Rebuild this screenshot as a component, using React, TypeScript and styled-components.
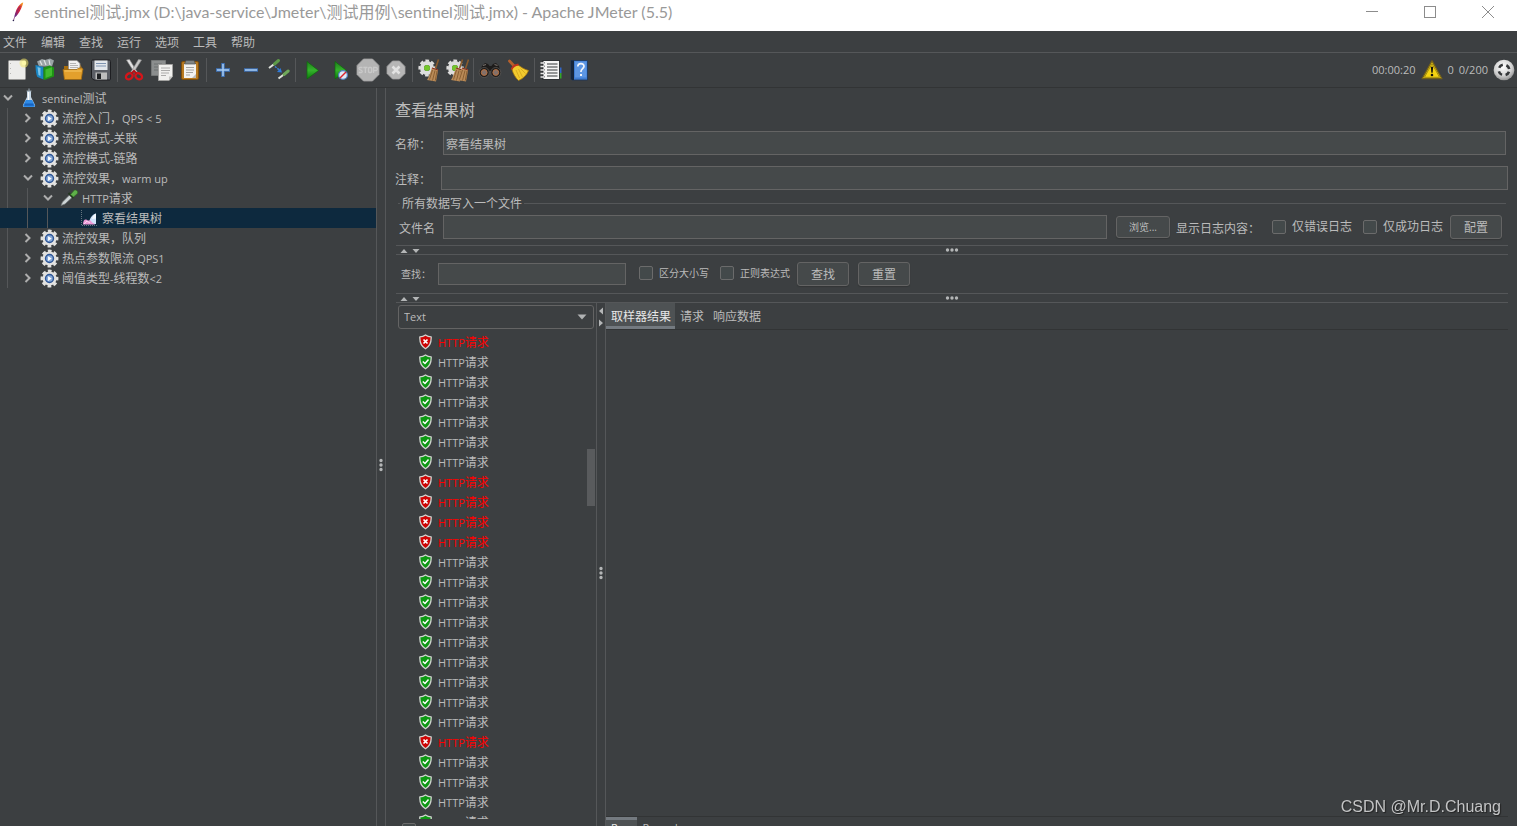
import React from 'react';
import styled, { createGlobalStyle, css } from 'styled-components';

const c = {
  bg: '#3c3f41',
  line: '#555759',
  darkLine: '#323435',
  text: '#bbbbbb',
  field: '#45494a',
  fieldBorder: '#646464',
  selection: '#0d293e',
  tab: '#4e5254',
  underline: '#747a80',
  error: '#ff0000',
};

const GlobalStyle = createGlobalStyle`
  *, *::before, *::after { box-sizing: border-box; }
  body {
    margin: 0;
    background: ${c.bg};
    color: ${c.text};
    font: 12px/16px 'Open Sans', 'Noto Sans CJK SC', sans-serif;
  }
  button, input, select { font: inherit; color: inherit; margin: 0; }
  svg { display: block; flex: none; }
`;

/* ---------- text ---------- */

const Latin = styled.span`
  font-size: 11px;
`;

const MixedText = styled.span`
  padding-top: 2px;
`;

/* Latin runs are set one size smaller than the Chinese text around them. */
function Label({ children }: { children: string }) {
  const parts = children.split(/([\x21-\x7e][\x20-\x7e]*)/).filter(Boolean);
  return (
    <MixedText>
      {parts.map((p, i) => (/^[\x21-\x7e]/.test(p) ? <Latin key={i}>{p}</Latin> : p))}
    </MixedText>
  );
}

/* ---------- frame ---------- */

const Window = styled.div`
  display: flex;
  flex-direction: column;
  height: 100vh;
  overflow: hidden;
  white-space: nowrap;
`;

const TitleBar = styled.header`
  display: flex;
  align-items: center;
  flex: none;
  height: 31px;
  padding-left: 10px;
  background: #ffffff;
  color: #999999;
`;

const FeatherBox = styled.span`
  margin-bottom: 8px;
`;

const TitleText = styled.h1`
  flex: 1;
  margin: 0 0 8px 8px;
  font: 400 16px/24px Lato, 'Noto Sans CJK SC', sans-serif;
`;

const WindowButton = styled.button`
  display: flex;
  justify-content: center;
  align-items: center;
  width: 58px;
  height: 24px;
  margin-bottom: 7px;
  padding: 0;
  border: 0;
  background: none;
`;

const MenuBar = styled.nav`
  display: flex;
  align-items: center;
  gap: 14px;
  flex: none;
  height: 22px;
  padding-left: 3px;
  border-bottom: 1px solid ${c.line};
`;

const MenuButton = styled.button`
  padding: 2px 0 0;
  border: 0;
  background: none;
`;

const Toolbar = styled.div`
  display: flex;
  align-items: center;
  flex: none;
  height: 35px;
  padding: 0 2px 0 3px;
  border-bottom: 1px solid ${c.darkLine};
`;

const ToolButton = styled.button`
  display: flex;
  justify-content: center;
  align-items: center;
  width: 28px;
  height: 28px;
  padding: 0;
  border: 0;
  background: none;
`;

const ToolSeparator = styled.span`
  width: 1px;
  height: 24px;
  margin: 0 2px;
  background: ${c.line};
`;

const Status = styled.div`
  display: flex;
  align-items: center;
  gap: 5px;
  margin-left: auto;
`;

const Body = styled.div`
  display: flex;
  flex: 1;
  min-height: 0;
`;

/* ---------- tree ---------- */

const TreePanel = styled.aside`
  flex: none;
  width: 376px;
`;

const TreeList = styled.ul`
  margin: 0;
  padding: 0;
  list-style: none;
`;

const TreeRow = styled.li<{ $selected?: boolean }>`
  display: flex;
  align-items: center;
  height: 20px;
  background: ${(p) => (p.$selected ? c.selection : 'none')};
`;

const Guide = styled.span<{ $hidden?: boolean }>`
  align-self: stretch;
  width: 20px;
  background: ${(p) =>
    p.$hidden ? 'none' : `linear-gradient(${c.line}, ${c.line}) 7px 0 / 1px 100% no-repeat`};
`;

const Chevron = styled.span`
  display: flex;
  justify-content: center;
  width: 16px;
`;

const TreeIcon = styled.span`
  display: flex;
  justify-content: center;
  width: 20px;
  margin: 0 3px;
`;

/* ---------- splitters ---------- */

const VerticalSplitter = styled.div`
  position: relative;
  display: flex;
  align-items: center;
  justify-content: center;
  flex: none;
  width: 10px;
  padding-top: 16px;
  border: solid ${c.line};
  border-width: 0 1px;
`;

const VerticalArrows = styled.div`
  position: absolute;
  top: 4px;
  left: 0;
`;

const HorizontalSplitter = styled.div`
  position: relative;
  display: flex;
  align-items: center;
  justify-content: center;
  flex: none;
  height: 10px;
  margin-left: 1px;
  border: solid ${c.line};
  border-width: 1px 0;
`;

const HorizontalArrows = styled.div`
  position: absolute;
  top: 1px;
  left: 4px;
`;

/* ---------- form ---------- */

const Main = styled.main`
  display: flex;
  flex-direction: column;
  flex: 1;
  min-width: 0;
  padding: 12px 9px 0;
`;

const Heading = styled.h2`
  margin: 0;
  font-size: 16px;
  line-height: 20px;
  font-weight: 400;
`;

const FormRow = styled.div<{ $inset?: boolean }>`
  display: flex;
  align-items: center;
  margin-top: 11px;
  padding-right: ${(p) => (p.$inset ? 2 : 0)}px;
`;

const FieldLabel = styled.label<{ $width: number }>`
  flex: none;
  width: ${(p) => p.$width}px;
  padding-top: 4px;
`;

const TextField = styled.input<{ $width?: number; $low?: boolean }>`
  ${(p) =>
    p.$width
      ? css`
          flex: none;
          width: ${p.$width}px;
        `
      : css`
          flex: 1;
          min-width: 0;
        `}
  height: ${(p) => (p.$low ? 22 : 24)}px;
  padding: 2px 2px 0;
  border: 1px solid ${c.fieldBorder};
  border-radius: 0;
  background: ${c.field};
  outline: 0;
`;

const Legend = styled.div`
  display: flex;
  align-items: center;
  gap: 2px;
  height: 27px;
  margin-bottom: -2px;
  padding: 0 2px 0 3px;
  &::before, &::after {
    content: '';
    width: 2px;
    height: 1px;
    background: ${c.line};
  }
  &::after { flex: 1; }
`;

const FileRow = styled.div`
  display: flex;
  align-items: center;
  padding: 0 6px 0 4px;
  margin-bottom: 6px;
`;

const PushButton = styled.button<{ $small?: boolean }>`
  flex: none;
  width: ${(p) => (p.$small ? 54 : 52)}px;
  height: ${(p) => (p.$small ? 22 : 24)}px;
  padding: ${(p) => (p.$small ? 0 : 2)}px 0 0;
  border: 1px solid ${c.fieldBorder};
  border-radius: 3px;
  background: ${c.field};
  box-shadow: 0 1px 1px #333637;
  font-size: ${(p) => (p.$small ? 10 : 12)}px;
`;

const FileActions = styled.div`
  display: flex;
  align-items: center;
  flex: none;
  margin-left: 9px;
`;

const ActionText = styled.span`
  margin: 0 12px 0 6px;
  padding-top: 4px;
`;

const CheckLabel = styled.label<{ $small?: boolean; $after: number }>`
  display: flex;
  align-items: center;
  gap: 6px;
  margin-right: ${(p) => p.$after}px;
  font-size: ${(p) => (p.$small ? 10 : 12)}px;
`;

const CheckBox = styled.input.attrs({ type: 'checkbox' })`
  appearance: none;
  flex: none;
  width: 14px;
  height: 14px;
  border: 1px solid #6b6b6b;
  border-radius: 2px;
  background: #43494a;
`;

const SearchRow = styled.div`
  display: flex;
  align-items: center;
  flex: none;
  height: 38px;
  padding-left: 6px;
`;

const SearchLabel = styled.label`
  width: 37px;
  font-size: 10px;
`;

const SearchChecks = styled.div`
  display: flex;
  margin: 0 0 2px 13px;
`;

const SearchButtons = styled.div`
  display: flex;
  gap: 9px;
`;

/* ---------- results ---------- */

const Results = styled.section`
  display: flex;
  flex: 1;
  min-height: 0;
  margin-left: 1px;
`;

const ResultsColumn = styled.div`
  display: flex;
  flex-direction: column;
  flex: none;
  width: 200px;
  padding: 2px 1px 0 2px;
`;

const SelectBox = styled.div`
  position: relative;
  margin-right: 1px;
`;

const Select = styled.select`
  appearance: none;
  display: block;
  width: 100%;
  height: 24px;
  padding: 0 5px;
  border: 1px solid ${c.fieldBorder};
  border-radius: 3px;
  background: ${c.bg};
  font-size: 11px;
`;

const SelectArrow = styled.span`
  position: absolute;
  top: 9px;
  right: 7px;
  pointer-events: none;
`;

const ResultsScroll = styled.div`
  display: flex;
  flex: 1;
  min-height: 0;
  margin-top: 3px;
`;

const ResultsList = styled.ul`
  flex: 1;
  margin: 0;
  padding: 0 0 0 21px;
  list-style: none;
  overflow: hidden;
`;

const ResultRow = styled.li<{ $failed: boolean }>`
  display: flex;
  align-items: center;
  gap: 6px;
  height: 20px;
  color: ${(p) => (p.$failed ? c.error : c.text)};
`;

const ScrollTrack = styled.div`
  width: 8px;
  padding-top: 117px;
`;

const ScrollThumb = styled.div`
  height: 57px;
  background: #595b5d;
`;

const ResultsFooter = styled.div`
  flex: none;
  height: 7px;
  padding: 4px 0 0 4px;
  overflow: hidden;
`;

const Detail = styled.div`
  display: flex;
  flex-direction: column;
  flex: 1;
  min-width: 0;
`;

const TabRow = styled.div`
  display: flex;
  flex: none;
  height: 27px;
  border-bottom: 1px solid ${c.darkLine};
`;

const Tab = styled.button<{ $active?: boolean }>`
  height: 26px;
  padding: 5px 4px 0 5px;
  border: 0;
  border-bottom: 3px solid ${(p) => (p.$active ? c.underline : 'transparent')};
  background: ${(p) => (p.$active ? c.tab : 'none')};
  color: ${(p) => (p.$active ? '#e6e6e6' : c.text)};
`;

const DetailBody = styled.div`
  flex: 1;
`;

const FormatTabs = styled.div`
  display: flex;
  align-items: flex-start;
  flex: none;
  height: 10px;
  border-top: 1px solid ${c.darkLine};
  overflow: hidden;
`;

const FormatTab = styled.button<{ $active?: boolean }>`
  padding: 0 5px;
  border: 0;
  border-top: 3px solid ${(p) => (p.$active ? c.underline : 'transparent')};
  background: ${(p) => (p.$active ? c.tab : 'none')};
  color: ${(p) => (p.$active ? '#e6e6e6' : c.text)};
  font-size: 11px;
`;

const Watermark = styled.div`
  position: fixed;
  right: 16px;
  bottom: 7px;
  color: #c3c4c5;
  font: 16px/24px 'Liberation Sans', Arial, sans-serif;
  text-shadow: 1px 1px 1px #222222;
`;

/* ---------- icons ---------- */

const I = ({ size = 24, children }: { size?: number; children: React.ReactNode }) => (
  <svg width={size} height={size} viewBox="0 0 24 24" aria-hidden="true">
    {children}
  </svg>
);

const FeatherIcon = () => (
  <svg width="16" height="20" viewBox="0 0 16 20" aria-hidden="true">
    <defs>
      <linearGradient id="feather" x1="0.8" y1="0" x2="0.2" y2="1">
        <stop offset="0" stopColor="#f59b22" />
        <stop offset="0.35" stopColor="#dc2a30" />
        <stop offset="0.7" stopColor="#b91f55" />
        <stop offset="1" stopColor="#5b2a86" />
      </linearGradient>
    </defs>
    <path d="M13.2 0.5C10.500 1 7.500 5 5.800 9.500c-.8 2-1.2 3.500-1.200 5.500L6 14.500C8.500 11.500 10.800 8 12 4.500c.5-1.500 1.200-3 1.200-4z" fill="url(#feather)" />
    <path d="M10.500 4C7.500 8 5.200 13 3.500 18.300" stroke="#7b2a76" strokeWidth="0.700" fill="none" />
    <circle cx="3.400" cy="18.500" r="0.800" fill="#2d2350" />
  </svg>
);

const NewIcon = () => (
  <I>
    <rect x="3.500" y="2.500" width="17" height="19" rx="1" fill="#ececea" stroke="#9a9a98" />
    <path d="M5.500 5v14" stroke="#b8b8b6" strokeWidth="1" strokeDasharray="1 4" />
    <circle cx="19" cy="5" r="4.500" fill="#f5ea6a" opacity="0.550" />
    <circle cx="19" cy="5" r="2.300" fill="#fdf8a8" />
  </I>
);

const TemplatesIcon = () => (
  <I>
    <path d="M4 3.500l5-2.500 3 1 5-1.500 4 2-2 6H6z" fill="#9ba3a6" />
    <path d="M7 3l2 4M11 2l2 5M16 2l1 5" stroke="#dfe3e4" strokeWidth="1.200" />
    <path d="M2.500 7l8 2v12.500l-6-2.500c-1-.5-2-7-2-12z" fill="#1a86c4" />
    <path d="M4.500 9l3 1v8l-2-1z" fill="#7cc4ea" />
    <path d="M10.500 9.500l6-2 4.500 2v9l-9.500 3.500-1-1z" fill="#1e9414" />
    <path d="M12.500 11.500L19 9.300v8.200l-6.500 2.500z" fill="#42bb2f" />
  </I>
);

const OpenIcon = () => (
  <I>
    <path d="M3 8h4l1-2h11l2 4v11H3z" fill="#a86d0c" />
    <path d="M7.500 2.500h8.500l3 3V15h-11.500z" fill="#f1f1f1" stroke="#8c8c8c" strokeWidth="0.800" />
    <path d="M9 5.500h6M9 7.500h8M9 9.500h8" stroke="#a6a6a6" strokeWidth="0.800" />
    <path d="M2 11.500h14l1.500-1.500H21l1 1-1.800 10.500H3.500z" fill="#e3a02c" stroke="#9b6711" strokeWidth="0.800" />
    <path d="M3.500 13h17" stroke="#f6c867" />
  </I>
);

const SaveIcon = () => (
  <I>
    <path d="M2.500 3.500C2.500 2.500 3 2 4 2h16c1 0 1.500.5 1.500 1.500V21c0 .6-.4 1-1 1H5l-2.500-2z" fill="#5b5e65" stroke="#1e1f22" />
    <rect x="5.500" y="2.500" width="13" height="9.500" fill="#e3e7ec" />
    <path d="M7 5.500h10M7 8h10" stroke="#7e93b0" />
    <rect x="6.500" y="14.500" width="11.500" height="7" fill="#bdbdbd" />
    <rect x="8" y="15.500" width="4" height="5.500" fill="#1e2023" />
  </I>
);

const CutIcon = () => (
  <I>
    <path d="M4.500 2l3-.5 8 13-2.500 1z" fill="#e3e3e3" stroke="#8f8f8f" strokeWidth="0.600" />
    <path d="M19.500 2l-3-.5-8 13 2.500 1z" fill="#c9c9c9" stroke="#8f8f8f" strokeWidth="0.600" />
    <ellipse cx="7.300" cy="18.300" rx="3.600" ry="2.800" transform="rotate(-35 7.300 18.300)" fill="none" stroke="#d4151a" strokeWidth="2.300" />
    <ellipse cx="16.700" cy="18.300" rx="3.600" ry="2.800" transform="rotate(35 16.700 18.300)" fill="none" stroke="#d4151a" strokeWidth="2.300" />
    <path d="M9.500 15.500l2.500-2.500 2.500 2.500" stroke="#b01015" strokeWidth="2" fill="none" />
  </I>
);

const CopyIcon = () => (
  <I>
    <path d="M1.500 2.500h14v15h-14z" fill="#8b8e8e" stroke="#747777" />
    <path d="M4 6h8M4 9h4M4 12h4" stroke="#6d7070" />
    <path d="M8.500 6.500h14v12l-3.500 4H8.500z" fill="#f0f0ee" stroke="#a2a2a0" />
    <path d="M11 10h9M11 12.500h9M11 15h8M11 17.500h5" stroke="#a3a3a1" strokeWidth="0.900" />
    <path d="M19 22.500v-4h3.500z" fill="#c4c4c2" />
  </I>
);

const PasteIcon = () => (
  <I>
    <rect x="3.500" y="3.500" width="17" height="18" rx="1.500" fill="#b87a20" stroke="#7c4e0c" />
    <path d="M6 6h12v14H6z" fill="#f2f2f0" />
    <path d="M8 2.500h8l1.500 3.500h-11z" fill="#7f8484" stroke="#4d5050" strokeWidth="0.700" />
    <path d="M8 9.500h8M8 12h8M8 14.500h7M8 17h4" stroke="#9b9b99" strokeWidth="0.900" />
    <path d="M14 20l4-4v4z" fill="#bcbcba" />
  </I>
);

const PlusIcon = () => (
  <I>
    <path d="M12 5v14M5 12h14" stroke="#3f75bd" strokeWidth="3.400" />
    <path d="M12 6v12M6 12h12" stroke="#a9cbf0" strokeWidth="1.500" />
  </I>
);

const MinusIcon = () => (
  <I>
    <path d="M5 12h14" stroke="#3f75bd" strokeWidth="3.400" />
    <path d="M6 12h12" stroke="#a9cbf0" strokeWidth="1.500" />
  </I>
);

const ToggleIcon = () => (
  <I>
    <path d="M2 10l6-4.500" stroke="#dfe3dc" strokeWidth="2" />
    <path d="M7.500 6l4-3.500" stroke="#5d9a48" strokeWidth="3" strokeLinecap="round" />
    <path d="M11.500 20.500l6-4.500" stroke="#dfe3dc" strokeWidth="2" />
    <path d="M17 16.500l4.200-3.500" stroke="#6fa85b" strokeWidth="3" strokeLinecap="round" />
    <path d="M8 8.500l5 4" stroke="#3b82d8" strokeWidth="1.400" strokeDasharray="2 1" />
    <path d="M15 14.500l-5-.5 3.500-4z" fill="#2f7bdb" />
  </I>
);

const PlayShape = () => (
  <>
    <defs>
      <linearGradient id="play" x1="0" y1="0" x2="0" y2="1">
        <stop offset="0" stopColor="#1f7d1b" />
        <stop offset="0.500" stopColor="#35b32c" />
        <stop offset="1" stopColor="#0b7a0b" />
      </linearGradient>
    </defs>
    <path d="M7 3.500L18.500 12.500 7 21z" fill="url(#play)" stroke="#0d6a0c" strokeWidth="0.700" />
  </>
);

const PlayIcon = () => (
  <I>
    <PlayShape />
  </I>
);

const PlayNoPauseIcon = () => (
  <I>
    <PlayShape />
    <circle cx="15" cy="17" r="4.400" fill="#dfe9f5" stroke="#4f7fbd" strokeWidth="1.200" />
    <path d="M12 20l6-6" stroke="#d9232a" strokeWidth="1.500" />
  </I>
);

const StopIcon = () => (
  <I>
    <path d="M7.500 1h9L23 7.500v9L16.500 23h-9L1 16.500v-9z" fill="#b4b4b4" stroke="#a2a2a2" strokeWidth="0.800" />
    <g fill="none" stroke="#c9c9c9" strokeWidth="1.300">
      <path d="M6.500 9.500H4a1 1 0 0 0-1 1.200c0 1 3.200 1.300 3.200 2.600a1 1 0 0 1-1 1.200H2.800" />
      <path d="M7.300 9.500h4.200M9.400 9.500v5.500" />
      <rect x="12.500" y="9.500" width="3.200" height="5" rx="1" />
      <path d="M17.500 15V9.500h2.300a1.500 1.500 0 0 1 0 3h-2.300" />
    </g>
  </I>
);

const ShutdownIcon = () => (
  <I>
    <path d="M8.500 3h7l5.500 5.500v7L15.500 21h-7L3 15.500v-7z" fill="#b6b6b6" stroke="#a0a0a0" strokeWidth="0.800" />
    <path d="M8.500 8.500l7 7M15.500 8.500l-7 7" stroke="#e2e2e2" strokeWidth="2.600" />
  </I>
);

const GearShape = ({ x, y }: { x: number; y: number }) => (
  <g transform={`translate(${x} ${y})`}>
    <circle r="5" fill="none" stroke="#dededd" strokeWidth="4" />
    <circle r="7.400" fill="none" stroke="#dededd" strokeWidth="2.400" strokeDasharray="3.600 2.212" strokeDashoffset="1.800" />
  </g>
);

const Broom = ({ x = 0 }: { x?: number }) => (
  <g transform={`translate(${x} 0)`}>
    <path d="M21.500 1.500l-3 9" stroke="#8a5a2c" strokeWidth="1.600" />
    <path d="M15 9.500l6 2-.5 4-1.500 8-9-1.500c2-3 3.500-8 5-12.500z" fill="#b98b58" />
    <path d="M15.500 12l-3 9.500M18 12.500l-2.500 10M20 13l-1.700 9.500" stroke="#7d5428" strokeWidth="0.800" />
    <path d="M15 10l6 2" stroke="#8c2d22" strokeWidth="1" />
  </g>
);

const ClearIcon = () => (
  <I>
    <GearShape x={10} y={10} />
    <circle cx="10" cy="10" r="3" fill="#74c62c" />
    <Broom />
  </I>
);

const ClearAllIcon = () => (
  <I>
    <GearShape x={10} y={10} />
    <circle cx="10" cy="10" r="3" fill="#74c62c" />
    <Broom x={-4} />
    <Broom x={2} />
  </I>
);

const BinocularsIcon = () => (
  <I>
    <path d="M4 8l3-3 3 1 1.500 2h2L15 6l3-1 3 3 1.500 7h-9l-.5-2h-2l-.5 2h-9z" fill="#1d1b1a" />
    <path d="M5 7.500l3-1M16.500 6.500l3 1" stroke="#77706b" strokeWidth="1.200" />
    <circle cx="6.200" cy="14.500" r="5" fill="#1d1b1a" stroke="#63605d" strokeWidth="0.700" />
    <circle cx="17.800" cy="14.500" r="5" fill="#1d1b1a" stroke="#63605d" strokeWidth="0.700" />
    <circle cx="6.200" cy="14.500" r="2.900" fill="#82706a" stroke="#b9703f" strokeWidth="1" />
    <circle cx="17.800" cy="14.500" r="2.900" fill="#82706a" stroke="#b9703f" strokeWidth="1" />
  </I>
);

const YellowBroomIcon = () => (
  <I>
    <path d="M3.500 3l6 6.500" stroke="#b5602c" strokeWidth="2.800" strokeLinecap="round" />
    <path d="M6 11.500c0-2.500 2.500-4.500 6-4.500 3 2 6.500 4.500 10.500 5.500-1.500 4-5 8-10 10-3-2.500-5.500-7-6.500-11z" fill="#f2cb2e" stroke="#a4770e" strokeWidth="0.800" />
    <path d="M5.500 11.500c1-3 3-4.500 7-5" stroke="#c2331e" strokeWidth="1.900" fill="none" />
    <path d="M10 12l3.500 8M12.500 11l4 8M14.500 10.500l5 5" stroke="#d2a31c" strokeWidth="0.800" />
  </I>
);

const NotebookIcon = () => (
  <I>
    <path d="M20 9.500h2.500V15H20z" fill="#3167c8" />
    <path d="M20 15h2.500v5.500H20z" fill="#35a629" />
    <rect x="4" y="2.500" width="16.500" height="19" fill="#f5f5f5" stroke="#24272a" strokeWidth="0.900" />
    <path d="M8 6h10.500M8 9h10.500M8 12h10.500M8 15h10.500M8 18h10.500" stroke="#35383b" strokeWidth="1.200" />
    <path d="M1.500 5h4M1.500 8.500h4M1.500 12h4M1.500 15.500h4M1.500 19h4" stroke="#e8e8e8" strokeWidth="1.300" />
    <path d="M5.500 4v17" stroke="#7a7d80" strokeWidth="0.800" strokeDasharray="1.500 2" />
  </I>
);

const HelpIcon = () => (
  <I>
    <path d="M4 2.500h16.500v19.500H5L4 21z" fill="#3f7dd3" stroke="#1c3558" strokeWidth="0.800" />
    <path d="M4 2.500h3V22H5l-1-1z" fill="#16263c" />
    <path d="M8 3.500h11.500v16H8z" fill="#5c96e4" />
    <path d="M10.800 8.500c0-3.800 6.200-3.800 6.200-.3 0 2.500-3.100 2.600-3.100 5.800" stroke="#f1f5fb" strokeWidth="1.700" fill="none" />
    <rect x="13" y="16" width="2" height="2" fill="#f1f5fb" />
  </I>
);

const WarningIcon = () => (
  <I size={22}>
    <path d="M12 2L22.800 21.500H1.200z" fill="#f6d411" stroke="#73601a" strokeWidth="1.400" strokeLinejoin="round" />
    <path d="M12 5.200L20.300 20H3.700z" fill="none" stroke="#5e5210" strokeWidth="0.600" />
    <path d="M10.700 8.500h2.600l-.6 6.500h-1.400z" fill="#14130a" />
    <circle cx="12" cy="17.500" r="1.400" fill="#14130a" />
  </I>
);

const ServersIcon = () => (
  <I size={22}>
    <defs>
      <radialGradient id="ball" cx="0.450" cy="0.350" r="0.700">
        <stop offset="0" stopColor="#ffffff" />
        <stop offset="0.600" stopColor="#d2d2d2" />
        <stop offset="1" stopColor="#858585" />
      </radialGradient>
    </defs>
    <circle cx="12" cy="12" r="11.300" fill="url(#ball)" />
    <circle cx="12" cy="12" r="5.800" fill="none" stroke="#343638" strokeWidth="2.800" strokeDasharray="5 4.110" strokeDashoffset="-2.050" />
  </I>
);

const FlaskIcon = () => (
  <svg width="14" height="20" viewBox="0 0 14 20" aria-hidden="true">
    <path d="M5 3h4v6l4 8c.4 1-.2 2-1.200 2H2.200c-1 0-1.600-1-1.200-2l4-8z" fill="#c7d8e6" />
    <path d="M3.800 12h6.400l2.600 5.300c.3.900-.2 1.700-1.200 1.700H2.400c-1 0-1.500-.8-1.200-1.700z" fill="#2f8be6" />
    <path d="M3 15.500h8l1 2.300H2z" fill="#1763c0" />
    <path d="M4.500 3h5M7 0.500v2.500" stroke="#8f9ba5" strokeWidth="1.200" />
    <path d="M6.500 4v8" stroke="#ffffff" strokeWidth="1.200" />
  </svg>
);

const ThreadGroupIcon = () => (
  <I size={19}>
    <circle cx="12" cy="12" r="9" fill="#e2e2e0" />
    <circle cx="12" cy="12" r="9.500" fill="none" stroke="#e2e2e0" strokeWidth="3.600" strokeDasharray="4.600 2.861" strokeDashoffset="2.300" />
    <circle cx="12" cy="12" r="5" fill="#86a9d8" stroke="#2d5596" strokeWidth="1.800" />
    <path d="M10.200 9l4.600 3-4.600 3z" fill="#ffffff" />
  </I>
);

const PipetteIcon = () => (
  <svg width="20" height="20" viewBox="0 0 20 20" aria-hidden="true">
    <path d="M2 17.500l1.500-3.500 7-7 2.500 2.500-7 6.500z" fill="#cfd5d6" stroke="#72797a" strokeWidth="0.700" />
    <path d="M9.500 5l5 5" stroke="#23361f" strokeWidth="2" />
    <path d="M11.500 6.500l3.500-4c1-1.500 5 .5 3.300 3.200L14.500 9z" fill="#5fb04a" stroke="#2f6a22" strokeWidth="0.700" />
  </svg>
);

const ChartIcon = () => (
  <svg width="16" height="16" viewBox="0 0 16 16" aria-hidden="true">
    <path d="M0.500 0v15.500H16" stroke="#66757f" strokeWidth="1" strokeDasharray="1 1" fill="none" />
    <path d="M8 14c0-5 3-9.500 7-10.500V14z" fill="#cfe3fb" />
    <path d="M11 9c.5-2.500 2-4.500 4-5.500v5z" fill="#f4f9ff" />
    <path d="M2 14.500c0-4 2-6 4-4.500s3-1 4 1 3 2 4 3.500z" fill="#ee9ad8" />
    <path d="M3 14l3-3 3 2" stroke="#fbd5f1" fill="none" />
  </svg>
);

const ShieldIcon = ({ failed }: { failed: boolean }) => (
  <svg width="13" height="16" viewBox="0 0 13 16" aria-hidden="true">
    <path d="M6.500 1C8 2.200 10 2.900 12.200 2.900c.2 5-.9 9.200-5.700 11.900C1.700 12.100.6 7.900.8 2.900 3 2.900 5 2.200 6.500 1z" fill={failed ? '#cc0404' : '#0c9812'} stroke="#d0d4d0" strokeWidth="1.300" strokeLinejoin="round" />
    {failed ? (
      <path d="M4.500 5.500l4 4M8.500 5.500l-4 4" stroke="#ffffff" strokeWidth="1.700" />
    ) : (
      <path d="M3.800 7.500l2.200 2 3.500-4" stroke="#ffffff" strokeWidth="1.500" fill="none" />
    )}
  </svg>
);

const ChevronIcon = ({ open }: { open: boolean }) => (
  <svg width="10" height="10" viewBox="0 0 10 10" aria-hidden="true">
    <path d={open ? 'M1 2.500l4 4 4-4' : 'M2.500 1l4 4-4 4'} fill="none" stroke="#adadad" strokeWidth="2" />
  </svg>
);

const UpDownArrows = () => (
  <svg width="20" height="8" viewBox="0 0 20 8" aria-hidden="true">
    <path d="M0.500 6L4 2l3.500 4zM12.500 2h7L16 6z" fill="#b4b6b7" />
  </svg>
);

const LeftRightArrows = () => (
  <svg width="8" height="20" viewBox="0 0 8 20" aria-hidden="true">
    <path d="M6 0.500v7L2 4zM2 12.500v7L6 16z" fill="#b4b6b7" />
  </svg>
);

const DotsAcross = () => (
  <svg width="14" height="4" viewBox="0 0 14 4" aria-hidden="true">
    <path d="M2.500 2h0M7 2h0M11.500 2h0" stroke="#b4b6b7" strokeWidth="3.400" strokeLinecap="round" />
  </svg>
);

const DotsDown = () => (
  <svg width="4" height="14" viewBox="0 0 4 14" aria-hidden="true">
    <path d="M2 2.500v0M2 7v0M2 11.500v0" stroke="#b4b6b7" strokeWidth="3.400" strokeLinecap="round" />
  </svg>
);

/* ---------- data ---------- */

const menus = ['文件', '编辑', '查找', '运行', '选项', '工具', '帮助'];

const toolGroups: [string, React.FC][][] = [
  [['新建', NewIcon], ['模板', TemplatesIcon], ['打开', OpenIcon], ['保存', SaveIcon]],
  [['剪切', CutIcon], ['复制', CopyIcon], ['粘贴', PasteIcon]],
  [['展开', PlusIcon], ['折叠', MinusIcon], ['切换', ToggleIcon]],
  [['启动', PlayIcon], ['不停顿启动', PlayNoPauseIcon], ['停止', StopIcon], ['关闭', ShutdownIcon]],
  [['清除', ClearIcon], ['清除全部', ClearAllIcon]],
  [['查找', BinocularsIcon], ['重置查找', YellowBroomIcon]],
  [['函数助手', NotebookIcon], ['帮助', HelpIcon]],
];

type Node = { text: string; depth: number; icon: React.FC; open?: boolean; leaf?: boolean };

const tree: Node[] = [
  { text: 'sentinel测试', depth: 0, icon: FlaskIcon, open: true },
  { text: '流控入门，QPS < 5', depth: 1, icon: ThreadGroupIcon },
  { text: '流控模式-关联', depth: 1, icon: ThreadGroupIcon },
  { text: '流控模式-链路', depth: 1, icon: ThreadGroupIcon },
  { text: '流控效果，warm up', depth: 1, icon: ThreadGroupIcon, open: true },
  { text: 'HTTP请求', depth: 2, icon: PipetteIcon, open: true },
  { text: '察看结果树', depth: 3, icon: ChartIcon, leaf: true },
  { text: '流控效果，队列', depth: 1, icon: ThreadGroupIcon },
  { text: '热点参数限流 QPS1', depth: 1, icon: ThreadGroupIcon },
  { text: '阈值类型-线程数<2', depth: 1, icon: ThreadGroupIcon },
];

const failedRows = [0, 7, 8, 9, 10, 20];
const results = Array.from({ length: 25 }, (_, i) => failedRows.includes(i));

export default function App() {
  return (
    <Window>
      <GlobalStyle />
      <TitleBar>
        <FeatherBox>
          <FeatherIcon />
        </FeatherBox>
        <TitleText>
          sentinel测试.jmx (D:\java-service\Jmeter\测试用例\sentinel测试.jmx) - Apache JMeter (5.5)
        </TitleText>
        <WindowButton aria-label="最小化">
          <svg width="12" height="12"><path d="M0 5.500h12" stroke="#8c8c8c" /></svg>
        </WindowButton>
        <WindowButton aria-label="最大化">
          <svg width="12" height="12"><rect x="0.500" y="0.500" width="11" height="11" fill="none" stroke="#8c8c8c" /></svg>
        </WindowButton>
        <WindowButton aria-label="关闭窗口">
          <svg width="12" height="12"><path d="M0 0l12 12M12 0L0 12" stroke="#8c8c8c" /></svg>
        </WindowButton>
      </TitleBar>

      <MenuBar>
        {menus.map((m) => (
          <MenuButton key={m}>{m}</MenuButton>
        ))}
      </MenuBar>

      <Toolbar>
        {toolGroups.map((group, g) => (
          <React.Fragment key={g}>
            {g > 0 && <ToolSeparator />}
            {group.map(([name, Icon]) => (
              <ToolButton key={name} aria-label={name}>
                <Icon />
              </ToolButton>
            ))}
          </React.Fragment>
        ))}
        <Status>
          <Latin>00:00:20</Latin>
          <WarningIcon />
          <Latin>0</Latin>
          <Latin>0/200</Latin>
          <ServersIcon />
        </Status>
      </Toolbar>

      <Body>
        <TreePanel>
          <TreeList>
            {tree.map((n) => (
              <TreeRow key={n.text} $selected={n.leaf}>
                {Array.from({ length: n.depth }, (_, i) => (
                  <Guide key={i} $hidden={n.leaf && i === 0} />
                ))}
                <Chevron>{!n.leaf && <ChevronIcon open={!!n.open} />}</Chevron>
                <TreeIcon>
                  <n.icon />
                </TreeIcon>
                <Label>{n.text}</Label>
              </TreeRow>
            ))}
          </TreeList>
        </TreePanel>

        <VerticalSplitter>
          <DotsDown />
        </VerticalSplitter>

        <Main>
          <Heading>查看结果树</Heading>
          <FormRow $inset>
            <FieldLabel htmlFor="name" $width={48}>名称：</FieldLabel>
            <TextField id="name" defaultValue="察看结果树" />
          </FormRow>
          <FormRow>
            <FieldLabel htmlFor="comment" $width={46}>注释：</FieldLabel>
            <TextField id="comment" />
          </FormRow>
          <Legend>所有数据写入一个文件</Legend>
          <FileRow>
            <FieldLabel htmlFor="file" $width={44}>文件名</FieldLabel>
            <TextField id="file" />
            <FileActions>
              <PushButton $small>浏览...</PushButton>
              <ActionText>显示日志内容：</ActionText>
              <CheckLabel $after={11}><CheckBox />仅错误日志</CheckLabel>
              <CheckLabel $after={7}><CheckBox />仅成功日志</CheckLabel>
              <PushButton>配置</PushButton>
            </FileActions>
          </FileRow>

          <HorizontalSplitter>
            <HorizontalArrows><UpDownArrows /></HorizontalArrows>
            <DotsAcross />
          </HorizontalSplitter>

          <SearchRow>
            <SearchLabel htmlFor="search">查找：</SearchLabel>
            <TextField id="search" $width={188} $low />
            <SearchChecks>
              <CheckLabel $small $after={11}><CheckBox />区分大小写</CheckLabel>
              <CheckLabel $small $after={7}><CheckBox />正则表达式</CheckLabel>
            </SearchChecks>
            <SearchButtons>
              <PushButton>查找</PushButton>
              <PushButton>重置</PushButton>
            </SearchButtons>
          </SearchRow>

          <HorizontalSplitter>
            <HorizontalArrows><UpDownArrows /></HorizontalArrows>
            <DotsAcross />
          </HorizontalSplitter>

          <Results>
            <ResultsColumn>
              <SelectBox>
                <Select aria-label="显示格式">
                  <option>Text</option>
                </Select>
                <SelectArrow>
                  <svg width="10" height="6"><path d="M0.500 0.500h9L5 5.500z" fill="#b0b2b3" /></svg>
                </SelectArrow>
              </SelectBox>
              <ResultsScroll>
                <ResultsList>
                  {results.map((failed, i) => (
                    <ResultRow key={i} $failed={failed}>
                      <ShieldIcon failed={failed} />
                      <Label>HTTP请求</Label>
                    </ResultRow>
                  ))}
                </ResultsList>
                <ScrollTrack>
                  <ScrollThumb />
                </ScrollTrack>
              </ResultsScroll>
              <ResultsFooter>
                <CheckBox aria-label="自动滚动" />
              </ResultsFooter>
            </ResultsColumn>

            <VerticalSplitter>
              <VerticalArrows><LeftRightArrows /></VerticalArrows>
              <DotsDown />
            </VerticalSplitter>

            <Detail>
              <TabRow>
                <Tab $active>取样器结果</Tab>
                <Tab>请求</Tab>
                <Tab>响应数据</Tab>
              </TabRow>
              <DetailBody />
              <FormatTabs>
                <FormatTab $active>Raw</FormatTab>
                <FormatTab>Parsed</FormatTab>
              </FormatTabs>
            </Detail>
          </Results>
        </Main>
      </Body>
      <Watermark>CSDN @Mr.D.Chuang</Watermark>
    </Window>
  );
}
